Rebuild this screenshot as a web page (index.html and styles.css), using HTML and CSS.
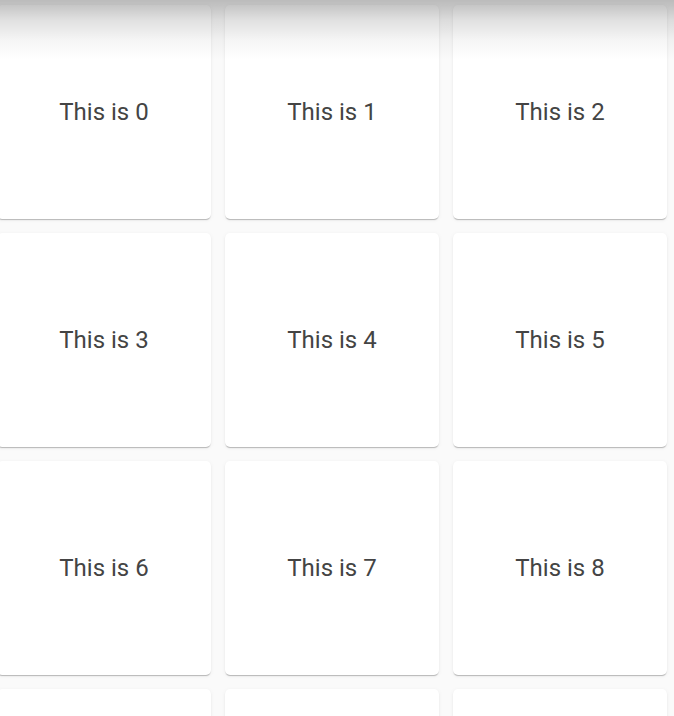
FILE: index.html
```html
<!DOCTYPE html>
<html>
<head>
<meta charset="utf-8">
<link rel="stylesheet" href="styles.css">
</head>
<body>
<div class="page">
  <div class="grid">
    <div class="card">This is 0</div>
    <div class="card">This is 1</div>
    <div class="card">This is 2</div>
    <div class="card">This is 3</div>
    <div class="card">This is 4</div>
    <div class="card">This is 5</div>
    <div class="card">This is 6</div>
    <div class="card">This is 7</div>
    <div class="card">This is 8</div>
    <div class="card"></div>
    <div class="card"></div>
    <div class="card"></div>
  </div>
  <div class="top-shadow"></div>
</div>
</body>
</html>
```
FILE: styles.css
```css
html, body {
  margin: 0;
  padding: 0;
  background: #fafafa;
  overflow: hidden;
}
.page {
  position: relative;
  width: 674px;
  height: 716px;
  overflow: hidden;
}
.grid {
  display: grid;
  grid-template-columns: repeat(3, 214px);
  grid-auto-rows: 214px;
  gap: 14px;
  margin-left: -3px;
  padding-top: 5px;
}
.card {
  background: #fff;
  border-radius: 5px;
  box-shadow: 0 2px 1px -1px rgba(0,0,0,0.16), 0 1px 1px 0 rgba(0,0,0,0.1), 0 1px 4px 0 rgba(0,0,0,0.06);
  display: flex;
  align-items: center;
  justify-content: center;
  font-family: Roboto, "Liberation Sans", sans-serif;
  font-size: 24px;
  color: #444;
}
.top-shadow {
  position: absolute;
  left: 0;
  top: 0;
  width: 100%;
  height: 60px;
  background: linear-gradient(to bottom, rgba(0,0,0,0.25) 0px, rgba(0,0,0,0.22) 6px, rgba(0,0,0,0.12) 20px, rgba(0,0,0,0.04) 40px, rgba(0,0,0,0) 60px);
  pointer-events: none;
}
```
